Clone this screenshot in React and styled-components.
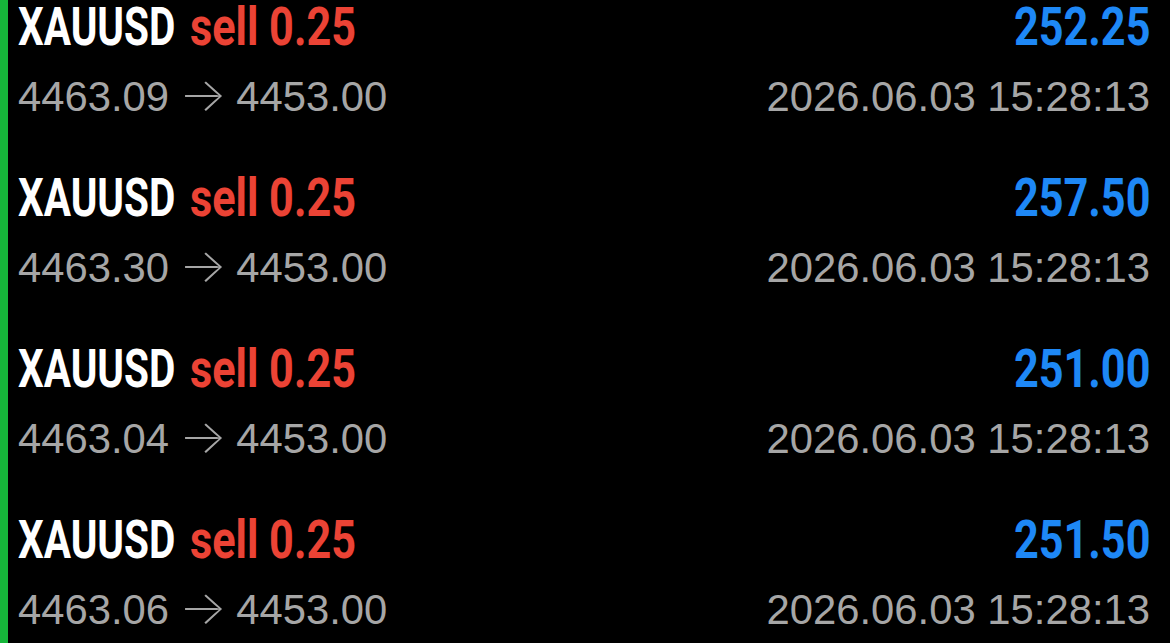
import React from 'react';
import styled, { createGlobalStyle } from 'styled-components';

const GlobalStyle = createGlobalStyle`
  html, body {
    margin: 0;
    padding: 0;
    background: #000;
    overflow: hidden;
  }
`;

const Screen = styled.div`
  display: flex;
  width: 1170px;
  height: 643px;
  background: #000;
  overflow: hidden;
`;

const SideBar = styled.div`
  width: 8px;
  flex: none;
  background: #16b73a;
`;

const List = styled.div`
  flex: 1;
  display: flex;
  flex-direction: column;
  padding: 0 20px 0 10px;
`;

const Row = styled.div`
  display: flex;
  flex-direction: column;
  height: 171px;
  flex: none;
`;

const Line = styled.div`
  display: flex;
  justify-content: space-between;
  align-items: baseline;
`;

const Head = styled(Line)`
  font-family: Roboto, 'Liberation Sans', sans-serif;
  font-weight: 700;
  font-size: 53px;
  line-height: 55px;
`;

const Group = styled.span`
  display: flex;
  align-items: baseline;
  gap: 13px;
`;

/* condensed look: squeeze the glyphs horizontally */
const Narrow = styled.span`
  display: inline-block;
  white-space: pre;
  color: ${({ $color }) => $color};
  transform: scaleX(${({ $scale }) => $scale});
  transform-origin: ${({ $right }) => ($right ? 'right' : 'left')} center;
  margin-right: ${({ $right, $trim }) => ($right ? 0 : `-${$trim}px`)};
`;

const Sub = styled(Line)`
  margin-top: 16px;
  font-family: 'Liberation Sans', Arial, sans-serif;
  font-size: 41.8px;
  line-height: 46px;
  color: #a6a6a6;
`;

const Arrow = styled.span`
  display: inline-block;
  font-family: Inter, 'DejaVu Sans', sans-serif;
  font-weight: 200;
  font-size: 46px;
  transform: scaleX(1.1);
`;

const trades = [
  { open: '4463.09', close: '4453.00', profit: '252.25' },
  { open: '4463.30', close: '4453.00', profit: '257.50' },
  { open: '4463.04', close: '4453.00', profit: '251.00' },
  { open: '4463.06', close: '4453.00', profit: '251.50' },
];

export default function App() {
  return (
    <>
      <GlobalStyle />
      <Screen>
        <SideBar />
        <List>
          {trades.map((t, i) => (
            <Row key={i}>
              <Head>
                <Group>
                  <Narrow $color="#fff" $scale={0.765} $trim={47}>
                    XAUUSD
                  </Narrow>
                  <Narrow $color="#eb4335" $scale={0.815}>
                    sell 0.25
                  </Narrow>
                </Group>
                <Narrow $right $color="#1e88f6" $scale={0.815}>
                  {t.profit}
                </Narrow>
              </Head>
              <Sub>
                <span>
                  {t.open} <Arrow>→</Arrow> {t.close}
                </span>
                <span>2026.06.03 15:28:13</span>
              </Sub>
            </Row>
          ))}
        </List>
      </Screen>
    </>
  );
}
